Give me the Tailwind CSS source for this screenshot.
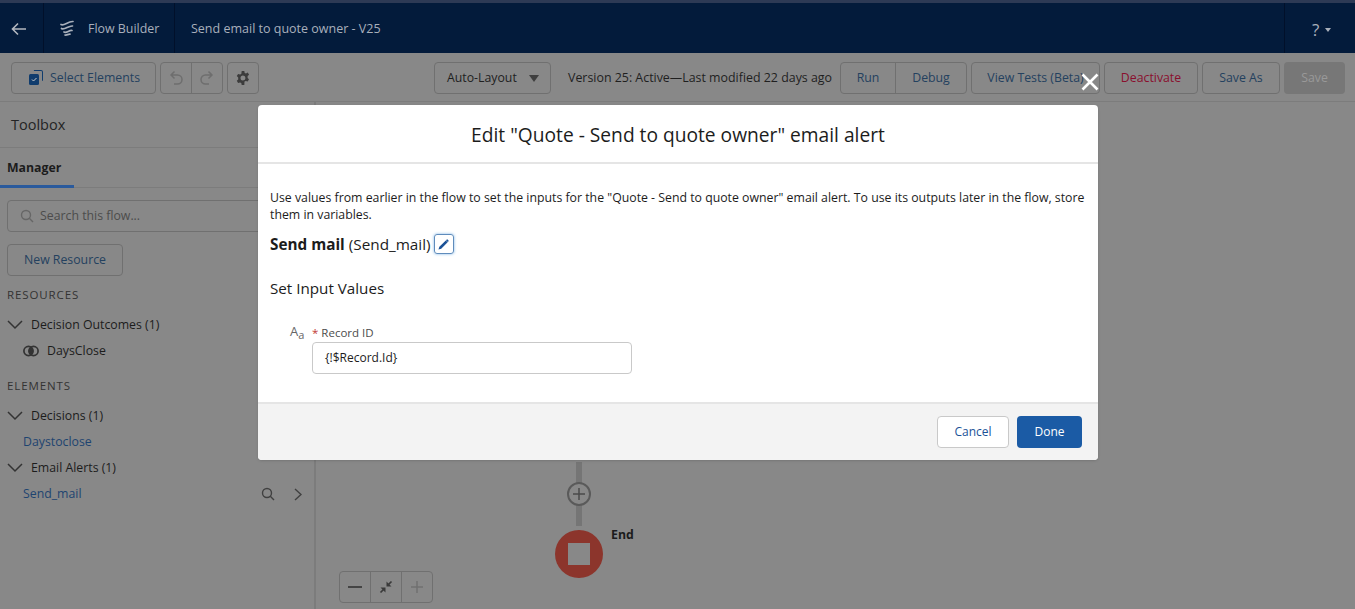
<!DOCTYPE html>
<html lang="en">
<head>
    <meta charset="UTF-8">
    <title>Flow Builder</title>
    <script src="https://cdn.jsdelivr.net/npm/@tailwindcss/browser@4"></script>
</head>
<body class="font-['Open_Sans',sans-serif] bg-[#888888] text-[12.3px] text-[#1c1c1c] overflow-hidden">
<div class="relative w-[1355px] h-[609px] overflow-hidden flex flex-col">

    <!-- header -->
    <header class="h-[53px] shrink-0 bg-[#031b3b] border-t-[3px] border-[#2d3a55] flex items-center text-[#a9b0bb]">
        <div class="w-[44px] h-full flex items-center pl-[10px] pt-[1px] border-r border-[#01102a]">
            <svg width="17" height="16" viewBox="0 0 17 16" fill="none" stroke="#b4b8bf" stroke-width="1.600"><path d="M16 8H3M8 2.500 2.500 8 8 13.500"/></svg>
        </div>
        <div class="w-[131px] h-full flex items-center border-r border-[#01102a] pl-[15px]">
            <svg width="18" height="18" viewBox="0 0 18 18" fill="none" stroke="#a9b0bb" stroke-width="1.700" stroke-linecap="round"><path d="M2 5.500c3 2 7-3.500 12-3M2.500 9.500c3 2 7-3 11-2.500M5 13c2.500 1.500 5-2 8-1.500M6 16c2 .5 3-1 5-.8"/></svg>
            <span class="ml-[11px] pt-[2px] text-[12.4px]">Flow Builder</span>
        </div>
        <div class="pl-[16px] pt-[2px] text-[12.5px]">Send email to quote owner - V25</div>
        <div class="ml-auto w-[71px] h-full border-l border-[#01102a] flex items-center pl-[27px] gap-[6px] pt-[3px]">
            <span class="text-[17px]">?</span>
            <span class="w-0 h-0 border-x-[3px] border-x-transparent border-t-[4px] border-t-[#a9b0bb]"></span>
        </div>
    </header>

    <!-- toolbar -->
    <div class="h-[49px] shrink-0 border-b border-[#7c7c7c] flex items-center pl-[11px] pt-[1px]">
        <button class="w-[145px] h-[32px] border border-[#707070] rounded-[4px] flex items-center pl-[17px] text-[#24415f]">
            <svg width="14" height="15" viewBox="0 0 14 15" fill="#103c6d"><path d="M5 0h7a2 2 0 0 1 2 2v8a1 1 0 0 1-1 1V2a1 1 0 0 0-1-1H5a1 1 0 0 1 0-1z"/><rect x="0" y="4" width="10" height="11" rx="1.500"/><path d="M3 9.500l1.500 1.500L7.500 8" stroke="#ccc" stroke-width="1" fill="none"/></svg>
            <span class="ml-[7px] pt-[1px]">Select Elements</span>
        </button>
        <div class="ml-[4px] w-[63px] h-[32px] border border-[#707070] rounded-[4px] flex">
            <div class="w-[31px] flex items-center justify-center border-r border-[#707070]">
                <svg width="14" height="15" viewBox="0 0 14 15" fill="none" stroke="#6e6e6e" stroke-width="1.500"><path d="M5.500 1.500 2 5l3.500 3.500M2 5h6.500a4.500 4.500 0 0 1 0 9H5"/></svg>
            </div>
            <div class="flex-1 flex items-center justify-center">
                <svg width="14" height="15" viewBox="0 0 14 15" fill="none" stroke="#6e6e6e" stroke-width="1.500"><path d="M8.500 1.500 12 5 8.500 8.500M12 5H5.500a4.500 4.500 0 0 0 0 9H9"/></svg>
            </div>
        </div>
        <button class="ml-[4px] w-[32px] h-[32px] border border-[#707070] rounded-[4px] flex items-center justify-center">
            <svg width="14" height="14" viewBox="0 0 14 14"><path fill="#3c3c3c" fill-rule="evenodd" d="M5.700 0h2.600l.4 1.900 1.300.6L11.700 1.500l1.400 2.200-1.500 1.400v1.800l1.400 1.400-1.300 2.300-1.900-.7-1.300.7L8.300 14H5.700l-.4-1.900-1.300-.7-1.900.7L.8 9.800l1.400-1.400V6.600L.8 5.100l1.300-2.200 1.900.7 1.300-.7zM7 4.500a2.500 2.500 0 1 0 0 5 2.500 2.500 0 0 0 0-5z"/></svg>
        </button>
        <button class="ml-[175px] w-[117px] h-[32px] border border-[#707070] rounded-[4px] flex items-center pl-[12px] pt-[1px] text-[#1f1f1f]">
            Auto-Layout
            <span class="ml-[12px] w-0 h-0 border-x-[5px] border-x-transparent border-t-[7px] border-t-[#3f3f3f]"></span>
        </button>
        <span class="ml-[17px] w-[272px] shrink-0 pt-[2px] whitespace-nowrap text-[12.4px] text-[#1f1f1f]">Version 25: Active—Last modified 22 days ago</span>
        <div class="w-[127px] h-[32px] border border-[#707070] rounded-[4px] flex pt-[1px] text-[#24415f]">
            <div class="w-[55px] flex items-center justify-center border-r border-[#707070] -mt-[1px] pt-[1px]">Run</div>
            <div class="flex-1 flex items-center justify-center">Debug</div>
        </div>
        <button class="ml-[4px] w-[129px] h-[32px] border border-[#707070] rounded-[4px] pt-[1px] text-[#24415f] whitespace-nowrap">View Tests (Beta)</button>
        <button class="ml-[4px] w-[94px] h-[32px] border border-[#707070] rounded-[4px] pt-[1px] text-[#8a0f2e]">Deactivate</button>
        <button class="ml-[4px] w-[78px] h-[32px] border border-[#707070] rounded-[4px] pt-[1px] text-[#24415f]">Save As</button>
        <button class="ml-[4px] w-[61px] h-[32px] bg-[#777777] rounded-[4px] pt-[1px] text-[#999999]">Save</button>
    </div>

    <div class="flex-1 flex min-h-0">
        <!-- left panel -->
        <aside class="w-[316px] shrink-0 border-r-[2px] border-[#7c7c7c]">
            <div class="h-[46px] pl-[11px] flex items-center text-[14.5px] border-b border-[#7c7c7c] text-[#242424]">Toolbox</div>
            <div class="h-[40px] border-b border-[#7c7c7c] flex">
                <div class="w-[74px] pl-[7px] pt-[11px] font-bold border-b-[3px] border-[#2a5a9c] h-[40px]">Manager</div>
            </div>
            <div class="pl-[7px] pr-[6px]">
                <div class="mt-[12px] h-[32px] border border-[#707070] rounded-[4px] flex items-center pl-[12px] text-[#4c4c4c]">
                    <svg width="14" height="14" viewBox="0 0 14 14" fill="none" stroke="#666" stroke-width="1.400"><circle cx="6" cy="6" r="4.500"/><path d="M9.300 9.300 13 13"/></svg>
                    <span class="ml-[6px]">Search this flow...</span>
                </div>
                <button class="mt-[12px] w-[116px] h-[32px] border border-[#707070] rounded-[4px] text-[#24415f]">New Resource</button>
                <div class="mt-[10px] text-[11.5px] tracking-[0.9px] text-[#333333] h-[20px]">RESOURCES</div>
                <div class="mt-[9px] flex items-center h-[20px]">
                    <svg width="16" height="10" viewBox="0 0 16 10" fill="none" stroke="#333" stroke-width="1.500"><path d="M1 1l7 7 7-7"/></svg>
                    <span class="ml-[8px]">Decision Outcomes (1)</span>
                </div>
                <div class="mt-[6px] flex items-center h-[20px] pl-[16px]">
                    <svg width="16" height="12" viewBox="0 0 16 12" fill="none" stroke="#333" stroke-width="1.700"><circle cx="5.500" cy="6" r="4.600"/><circle cx="10.500" cy="6" r="4.600"/><path fill="#333" stroke="none" d="M8 2.100a4.600 4.600 0 0 1 0 7.800 4.600 4.600 0 0 1 0-7.800z"/></svg>
                    <span class="ml-[8px]">DaysClose</span>
                </div>
                <div class="mt-[16px] text-[11.5px] tracking-[0.9px] text-[#333333] h-[20px]">ELEMENTS</div>
                <div class="mt-[9px] flex items-center h-[20px]">
                    <svg width="16" height="10" viewBox="0 0 16 10" fill="none" stroke="#333" stroke-width="1.500"><path d="M1 1l7 7 7-7"/></svg>
                    <span class="ml-[8px]">Decisions (1)</span>
                </div>
                <div class="mt-[6px] h-[20px] pl-[16px] text-[#1e4470] leading-[20px]">Daystoclose</div>
                <div class="mt-[6px] flex items-center h-[20px]">
                    <svg width="16" height="10" viewBox="0 0 16 10" fill="none" stroke="#333" stroke-width="1.500"><path d="M1 1l7 7 7-7"/></svg>
                    <span class="ml-[8px]">Email Alerts (1)</span>
                </div>
                <div class="mt-[6px] h-[20px] pl-[16px] flex items-center text-[#1e4470]">
                    <span>Send_mail</span>
                    <svg class="ml-auto" width="14" height="14" viewBox="0 0 14 14" fill="none" stroke="#404040" stroke-width="1.400"><circle cx="6" cy="6" r="4.500"/><path d="M9.300 9.300 13 13"/></svg>
                    <svg class="ml-[19px] mr-[6px]" width="8" height="13" viewBox="0 0 8 13" fill="none" stroke="#404040" stroke-width="1.400"><path d="M1 1l6 5.500L1 12"/></svg>
                </div>
            </div>
        </aside>

        <!-- canvas -->
        <main class="relative flex-1">
            <div class="absolute left-[260px] top-[360px] w-[6px] h-[64px] bg-[#757575]"></div>
            <div class="absolute left-[251px] top-[380px] w-[24px] h-[24px] rounded-full border-2 border-[#5a5a5a] bg-[#888888] flex items-center justify-center">
                <svg width="14" height="14" viewBox="0 0 14 14" stroke="#4a4a4a" stroke-width="1.500"><path d="M7 1v12M1 7h12"/></svg>
            </div>
            <div class="absolute left-[239px] top-[428px] w-[48px] h-[48px] rounded-full bg-[#8c352c] flex items-center justify-center">
                <div class="w-[22px] h-[22px] bg-[#888888]"></div>
            </div>
            <div class="absolute left-[295px] top-[424px] font-bold text-[#1c1c1c]">End</div>
            <div class="absolute left-[23px] top-[469px] h-[32px] w-[94px] border border-[#707070] rounded-[4px] flex">
                <div class="flex-1 flex items-center justify-center border-r border-[#707070]">
                    <svg width="14" height="2" viewBox="0 0 14 2"><path d="M0 1h14" stroke="#444" stroke-width="2"/></svg>
                </div>
                <div class="flex-1 flex items-center justify-center border-r border-[#707070]">
                    <svg width="14" height="14" viewBox="0 0 14 14" fill="#3a3a3a"><path d="M1.500 12.500l4-4M12.500 1.500l-4 4" stroke="#3a3a3a" stroke-width="1.700"/><path d="M7.500 1.500v5h5zM6.500 12.500v-5h-5z"/></svg>
                </div>
                <div class="flex-1 flex items-center justify-center">
                    <svg width="14" height="14" viewBox="0 0 14 14" stroke="#707070" stroke-width="1.500"><path d="M7 1v12M1 7h12"/></svg>
                </div>
            </div>
        </main>
    </div>

    <!-- close of modal -->
    <svg class="absolute left-[1081px] top-[73px]" width="18" height="18" viewBox="0 0 18 18" stroke="#fff" stroke-width="2.600"><path d="M1.500 1.500l15 15M16.500 1.500l-15 15"/></svg>

    <!-- modal -->
    <div class="absolute left-[258px] top-[105px] w-[840px] h-[355px] bg-white rounded-[4px] flex flex-col shadow-sm overflow-hidden">
        <div class="h-[59px] shrink-0 border-b-[2px] border-[#e5e5e5] flex items-center justify-center pt-[4px] text-[19.2px] text-[#1c1c1c]">Edit "Quote - Send to quote owner" email alert</div>
        <div class="flex-1 pl-[12px] pr-[8px] pt-[25px] text-[#1c1c1c]">
            <p class="leading-[17px]">Use values from earlier in the flow to set the inputs for the "Quote - Send to quote owner" email alert. To use its outputs later in the flow, store them in variables.</p>
            <div class="mt-[9px] flex items-center h-[24px] text-[15.3px]">
                <span class="font-bold">Send mail</span>
                <span class="ml-[4px]">(Send_mail)</span>
                <span class="ml-[3px] w-[20px] h-[20px] rounded-[3px] border border-[#5f8cbc] shadow-[0_0_3px_#7db4e6] flex items-center justify-center">
                    <svg width="11" height="11" viewBox="0 0 12 12" fill="#1b5297"><path d="M8.500 1.500l2 2-7 7-3 1 1-3zM9.300.7a1 1 0 0 1 1.400 0l.6.6a1 1 0 0 1 0 1.400l-.6.6-2-2z"/></svg>
                </span>
            </div>
            <div class="mt-[21px] text-[15.2px]">Set Input Values</div>
            <div class="mt-[24px] pl-[20px] flex">
                <div class="text-[#666666] text-[13px] w-[22px] leading-[14px] font-medium">A<sub class="text-[11px]">a</sub></div>
                <div>
                    <div class="text-[11.5px] text-[#4c4c4c] h-[17px]"><span class="text-[#c23934]">*</span> Record ID</div>
                    <div class="mt-[1px] w-[320px] h-[32px] border border-[#c9c9c9] rounded-[4px] pl-[12px] flex items-center text-[12px]">{!$Record.Id}</div>
                </div>
            </div>
        </div>
        <div class="h-[58px] shrink-0 bg-[#f3f3f3] border-t-[2px] border-[#e5e5e5] flex items-center justify-end pr-[16px] gap-[8px]">
            <button class="w-[72px] h-[32px] bg-white border border-[#c9c9c9] rounded-[4px] text-[#1b5297] text-[12px]">Cancel</button>
            <button class="w-[65px] h-[32px] bg-[#1b5ba5] rounded-[4px] text-white text-[12px]">Done</button>
        </div>
    </div>
</div>
</body>
</html>
